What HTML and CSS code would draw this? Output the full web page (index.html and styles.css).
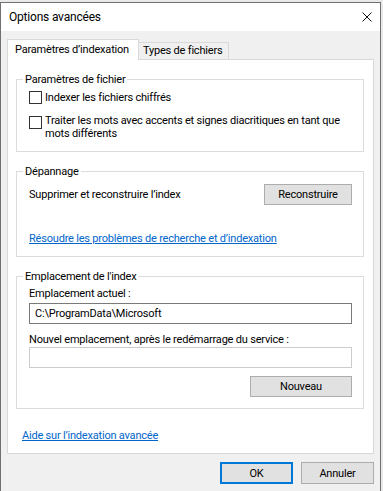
FILE: index.html
```html
<!DOCTYPE html>
<html lang="fr">
<head>
    <meta charset="UTF-8">
    <title>Options avancées</title>
    <link rel="stylesheet" href="styles.css">
</head>
<body>
    <div class="window">
        <div class="titlebar">
            <span>Options avancées</span>
            <svg class="close" width="10" height="10" viewBox="0 0 10 10">
                <path d="M0.5 0.5L9.5 9.5M9.5 0.5L0.5 9.5" stroke="#111" stroke-width="1" fill="none"/>
            </svg>
        </div>

        <div class="dialog-body">
            <div class="tabs">
                <div class="tab active">Paramètres d’indexation</div>
                <div class="tab">Types de fichiers</div>
            </div>

            <div class="panel">
                <fieldset class="group">
                    <legend>Paramètres de fichier</legend>
                    <div class="check-row">
                        <span class="box"></span>
                        <span>Indexer les fichiers chiffrés</span>
                    </div>
                    <div class="check-row second">
                        <span class="box"></span>
                        <span class="nowrap">Traiter les mots avec accents et signes diacritiques en tant que<br>mots différents</span>
                    </div>
                </fieldset>

                <fieldset class="group">
                    <legend>Dépannage</legend>
                    <div class="action-row">
                        <span>Supprimer et reconstruire l’index</span>
                        <button class="btn rebuild">Reconstruire</button>
                    </div>
                    <a class="link troubleshoot" href="#">Résoudre les problèmes de recherche et d’indexation</a>
                </fieldset>

                <fieldset class="group">
                    <legend>Emplacement de l'index</legend>
                    <div class="field-label">Emplacement actuel :</div>
                    <div class="textbox">C:\ProgramData\Microsoft</div>
                    <div class="field-label next">Nouvel emplacement, après le redémarrage du service :</div>
                    <div class="textbox empty"></div>
                    <div class="button-row">
                        <button class="btn new">Nouveau</button>
                    </div>
                </fieldset>

                <a class="link help" href="#">Aide sur l’indexation avancée</a>
            </div>

            <div class="actions">
                <button class="btn dialog default">OK</button>
                <button class="btn dialog">Annuler</button>
            </div>
        </div>
    </div>
</body>
</html>
```

FILE: styles.css
```css
body {
    margin: 0;
    background: #e9e9e9;
    font-family: Roboto, "Noto Sans", sans-serif;
    font-size: 11px;
    letter-spacing: -0.2px;
    color: #000;
}

.window {
    width: 381px;
    margin-top: 2px;
    border: 1px solid #707070;
    border-bottom: none;
    box-sizing: border-box;
    background: #f0f0f0;
}

.titlebar {
    height: 28px;
    background: #fff;
    display: flex;
    align-items: center;
    justify-content: space-between;
    padding: 0 8px 0 8px;
    font-size: 12px;
}

.dialog-body {
    padding: 8px 6px 20px 6px;
}

/* onglets */
.tabs {
    display: flex;
    align-items: flex-end;
    height: 20px;
}
.tab {
    box-sizing: border-box;
    height: 17px;
    line-height: 16px;
    border: 1px solid #d9d9d9;
    border-bottom: none;
    background: #f0f0f0;
    width: 90px;
    padding-left: 4px;
    border-left: none;
}
.tab.active {
    position: relative;
    z-index: 1;
    height: 21px;
    line-height: 20px;
    margin-bottom: -1px;
    width: 132px;
    padding-left: 7px;
    background: #fff;
    border-left: 1px solid #d9d9d9;
}

.panel {
    box-sizing: border-box;
    height: 395px;
    background: #fff;
    border: 1px solid #d9d9d9;
    padding: 0 9px 0 8px;
}

/* cadres de groupe */
.group {
    margin: 13px 0 0;
    padding: 0 11px 11px 12px;
    border: 1px solid #dcdcdc;
    min-width: 0;
}
.group legend {
    padding: 0 2px;
    margin-left: -6px;
    line-height: 13px;
}

.check-row {
    display: flex;
    gap: 3px;
    line-height: 13px;
    margin-top: 5px;
}
.check-row.second {
    margin-top: 10px;
}
.check-row.second .box {
    margin-top: 2px;
}
.nowrap {
    white-space: nowrap;
}
.box {
    flex: none;
    width: 13px;
    height: 13px;
    box-sizing: border-box;
    border: 1px solid #333;
    background: #fff;
}

.action-row {
    display: flex;
    justify-content: space-between;
    align-items: center;
    margin-top: 6px;
}

.link {
    display: block;
    line-height: 13px;
    color: #0066cc;
    text-decoration: underline;
}
.link.troubleshoot {
    margin-top: 27px;
}
.link.help {
    margin-top: 20px;
    margin-left: 6px;
    width: max-content;
}

.field-label {
    line-height: 13px;
    margin-top: 4px;
}
.field-label.next {
    margin-top: 9px;
}
.textbox {
    box-sizing: border-box;
    height: 21px;
    margin-top: 3px;
    padding-left: 5px;
    line-height: 19px;
    border: 1px solid #7a7a7a;
    background: #fff;
}
.textbox.empty {
    margin-top: 1px;
    border-color: #cccccc;
}

.button-row {
    display: flex;
    justify-content: flex-end;
    margin-top: 8px;
}

/* boutons */
.btn {
    box-sizing: border-box;
    height: 21px;
    padding: 0;
    font-family: inherit;
    font-size: 11px;
    letter-spacing: inherit;
    color: #000;
    background: #e1e1e1;
    border: 1px solid #adadad;
}
.btn.rebuild {
    width: 88px;
}
.btn.new {
    width: 102px;
}

.actions {
    display: flex;
    justify-content: flex-end;
    gap: 8px;
    margin-top: 8px;
}
.btn.dialog {
    width: 73px;
    height: 22px;
}
.btn.default {
    border: 2px solid #0078d7;
}
```
